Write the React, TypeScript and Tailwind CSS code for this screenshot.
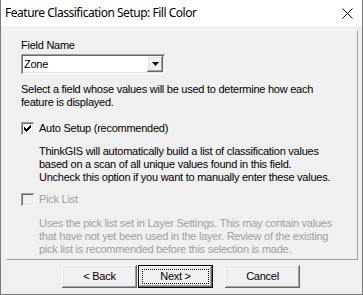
const raised =
  "shadow-[inset_-1px_-1px_0_#696969,inset_1px_1px_0_#ffffff,inset_-2px_-2px_0_#a0a0a0,inset_2px_2px_0_#e3e3e3]";
const sunken =
  "shadow-[inset_1px_1px_0_#a0a0a0,inset_-1px_-1px_0_#ffffff,inset_2px_2px_0_#696969,inset_-2px_-2px_0_#e3e3e3]";

function CheckBox({ checked, disabled }: { checked?: boolean; disabled?: boolean }) {
  return (
    <div
      className={`w-[13px] h-[13px] shrink-0 ${sunken} ${disabled ? "bg-[#f0f0f0]" : "bg-white"}`}
    >
      {checked && (
        <svg width="13" height="13" viewBox="0 0 13 13">
          <path d="M3 5h1v1h1v1h1V6h1V5h1V4h1V3h1v3H9v1H8v1H7v1H6v1H5V9H4V8H3z" fill="#000" />
        </svg>
      )}
    </div>
  );
}

function Button({ label, isDefault }: { label: string; isDefault?: boolean }) {
  if (isDefault) {
    return (
      <div className="w-[75px] h-[23px] border border-black bg-[#f0f0f0]">
        <div className={`w-full h-full p-[3px] ${raised}`}>
          <div className="w-full h-full border border-dotted border-black flex items-center justify-center">
            {label}
          </div>
        </div>
      </div>
    );
  }
  return (
    <div className={`w-[75px] h-[23px] bg-[#f0f0f0] flex items-center justify-center ${raised}`}>
      {label}
    </div>
  );
}

export default function App() {
  return (
    <div className="w-[363px] h-[295px] bg-[#f0f0f0] border-x border-b border-[#7a7a7a] flex flex-col font-['Liberation_Sans',Arial,sans-serif] text-[11px] leading-[13px] tracking-[-0.25px] text-black overflow-hidden">
      <div className="h-[26px] shrink-0 bg-white flex items-center justify-between pl-[4px] pr-[9px]">
        <span className="font-['Noto_Sans',sans-serif] text-[12px] leading-[16px] tracking-[-0.48px]">
          Feature Classification Setup: Fill Color
        </span>
        <svg width="11" height="11" viewBox="0 0 11 11">
          <path d="M0.5 0.5L10.5 10.5M10.5 0.5L0.5 10.5" stroke="#000" strokeWidth="1" />
        </svg>
      </div>

      <div className="pl-[5px] pr-[4px] pt-[4px]">
        <div className="h-[230px] border border-t-white border-l-white border-b-[#a0a0a0] border-r-[#a0a0a0] pl-[14px] pt-[8px]">
          <div>Field Name</div>

          <div className={`mt-[2px] w-[144px] h-[20px] bg-white flex items-center ${sunken} p-[2px]`}>
            <span className="flex-1 pl-[1px]">Zone</span>
            <div className={`w-[16px] h-full bg-[#f0f0f0] flex items-center justify-center ${raised}`}>
              <svg width="7" height="4" viewBox="0 0 7 4">
                <path d="M0 0h7L3.5 4z" fill="#000" />
              </svg>
            </div>
          </div>

          <p className="mt-[9px]">
            Select a field whose values will be used to determine how each
            <br />
            feature is displayed.
          </p>

          <div className="mt-[13px] flex items-center">
            <CheckBox checked />
            <span className="ml-[5px]">Auto Setup (recommended)</span>
          </div>

          <p className="mt-[10px] pl-[18px]">
            ThinkGIS will automatically build a list of classification values
            <br />
            based on a scan of all unique values found in this field.
            <br />
            Uncheck this option if you want to manually enter these values.
          </p>

          <div className="mt-[9px] flex items-center text-[#a0a0a0]">
            <CheckBox disabled />
            <span className="ml-[5px]">Pick List</span>
          </div>

          <p className="mt-[11px] pl-[18px] text-[#a0a0a0]">
            Uses the pick list set in Layer Settings. This may contain values
            <br />
            that have not yet been used in the layer. Review of the existing
            <br />
            pick list is recommended before this selection is made.
          </p>
        </div>
      </div>

      <div className="mt-[5px] pl-[61px] flex">
        <Button label="< Back" />
        <div className="ml-[1px]">
          <Button label="Next >" isDefault />
        </div>
        <div className="ml-[12px]">
          <Button label="Cancel" />
        </div>
      </div>
    </div>
  );
}
